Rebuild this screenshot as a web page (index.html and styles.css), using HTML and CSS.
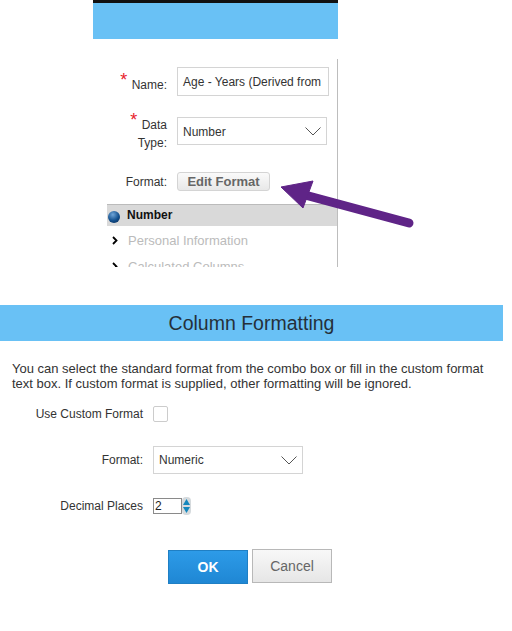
FILE: index.html
```html
<!DOCTYPE html>
<html lang="en">
<head>
<meta charset="utf-8">
<title>Column Formatting</title>
<link rel="stylesheet" href="styles.css">
</head>
<body>
<div class="top">
  <div class="top-bar"></div>
  <div class="form">
    <div class="row row-name">
      <div class="label label-name"><span class="req">*</span> Name:</div>
      <div class="field field-name">Age - Years (Derived from</div>
    </div>
    <div class="row row-type">
      <div class="label label-two"><span class="req">*</span> Data<br>Type:</div>
      <div class="field field-select"><span class="field-text">Number</span>
        <svg class="chev" viewBox="0 0 16 9"><path d="M.5.5 8 8 15.500.5" fill="none" stroke="#555" stroke-width="1"/></svg>
      </div>
    </div>
    <div class="row row-format">
      <div class="label label-format">Format:</div>
      <button class="edit">Edit Format</button>
    </div>
    <div class="tree">
      <div class="node node-on">
        <span class="ball"></span><span class="node-text">Number</span>
      </div>
      <div class="node">
        <svg class="caret" viewBox="0 0 6 9"><path d="M1 1 4.500 4.500 1 8" fill="none" stroke="#000" stroke-width="1.800"/></svg>Personal Information
      </div>
      <div class="node">
        <svg class="caret" viewBox="0 0 6 9"><path d="M1 1 4.500 4.500 1 8" fill="none" stroke="#000" stroke-width="1.800"/></svg>Calculated Columns
      </div>
    </div>
  </div>
</div>
<svg class="arrow" viewBox="0 0 512 300">
  <path d="M305 195 409 223" fill="none" stroke="#5f2487" stroke-width="9" stroke-linecap="round"/>
  <path d="M281 187 313 181 303 208Z" fill="#5f2487" stroke="#5f2487" stroke-linejoin="round"/>
</svg>
<div class="dialog">
  <h1 class="title">Column Formatting</h1>
  <p class="intro">You can select the standard format from the combo box or fill in the custom format text box. If custom format is supplied, other formatting will be ignored.</p>
  <div class="opt opt-custom">
    <div class="opt-label">Use Custom Format</div>
    <span class="check"></span>
  </div>
  <div class="opt opt-format">
    <div class="opt-label">Format:</div>
    <div class="field field-numeric">Numeric
      <svg class="chev" viewBox="0 0 16 9"><path d="M.5.5 8 8 15.500.5" fill="none" stroke="#555" stroke-width="1"/></svg>
    </div>
  </div>
  <div class="opt opt-decimal">
    <div class="opt-label">Decimal Places</div>
    <div class="spin-input">2</div>
    <svg class="spin" viewBox="0 0 9 18"><rect width="9" height="18" rx="4" fill="#d5dadd"/><path d="M4.500 2 8 8H1Z" fill="#1487bd"/><path d="M1 10H8L4.500 16Z" fill="#1487bd"/></svg>
  </div>
  <div class="actions">
    <button class="btn btn-ok">OK</button>
    <button class="btn btn-cancel">Cancel</button>
  </div>
</div>
</body>
</html>
```

FILE: styles.css
```css
* { box-sizing: border-box; }
html, body { margin: 0; padding: 0; background: #fff; }
body {
  width: 512px;
  height: 631px;
  overflow: hidden;
  position: relative;
  font-family: "Liberation Sans", Arial, sans-serif;
  font-size: 12px;
  color: #333;
}
.top { margin-left: 93px; width: 245px; height: 267px; overflow: hidden; }
.top-bar { height: 39px; background: #69c1f5; border-top: 3px solid #111; }
.form { margin-top: 20px; height: 208px; border-right: 1px solid #bdbdbd; padding-top: 8px; }
.row { display: flex; align-items: center; }
.label { width: 74px; margin-right: 10px; text-align: right; color: #333; }
.label-name { padding-top: 4px; }
.label-two { line-height: 18px; padding-top: 3px; }
.label-format { padding-top: 2px; }
.req { color: #e8212b; font-size: 18px; line-height: 10px; vertical-align: 3px; margin-right: 1px; }
.field {
  display: flex;
  align-items: center;
  border: 1px solid #d4d4d4;
  background: #fff;
  padding-left: 5px;
  color: #333;
  white-space: nowrap;
}
.row-name { height: 29px; }
.field-name { width: 152px; height: 29px; }
.row-type { height: 32px; margin-top: 20px; }
.field-select { width: 150px; height: 28px; margin-top: -2px; justify-content: space-between; padding-right: 5px; }
.field-text { padding-top: 1px; }
.chev { width: 16px; height: 9px; display: block; }
.row-format { height: 20px; margin-top: 23px; }
.edit {
  width: 93px;
  height: 19px;
  padding: 0;
  border: 1px solid #d4d4d4;
  border-radius: 3px;
  background: linear-gradient(#fafafa, #e8e8e8);
  font: bold 13px "Liberation Sans", Arial, sans-serif;
  color: #666;
}
.tree { margin-top: 13px; margin-left: 14px; font-size: 13px; }
.node { display: flex; align-items: center; height: 22px; margin-bottom: 4px; padding-left: 1px; color: #bbb; white-space: nowrap; }
.node-on { background: #d9d9d9; border-top: 1px solid #bbb; color: #111; font-weight: bold; font-size: 12px; margin-bottom: 3px; }
.node-text { margin-top: -2px; }
.ball {
  width: 12px;
  height: 12px;
  margin: 2px 7px 0 0;
  border-radius: 50%;
  background: radial-gradient(circle at 40% 30%, #6fa5d8, #124f8d 55%, #08254a);
}
.caret { width: 6px; height: 9px; margin: 0 10px 0 4px; }
.arrow { position: absolute; left: 0; top: 0; width: 512px; height: 300px; pointer-events: none; }
.dialog { margin-top: 38px; }
.title {
  width: 503px;
  height: 36px;
  margin: 0;
  background: #69c1f5;
  color: #25303a;
  font-size: 19.500px;
  font-weight: normal;
  line-height: 36px;
  text-align: center;
}
.intro { margin: 20px 0 0 12px; width: 480px; line-height: 15px; font-size: 13px; color: #333; }
.opt { display: flex; align-items: center; }
.opt-label { width: 143px; margin-right: 10px; text-align: right; color: #333; }
.check { width: 15px; height: 16px; border: 1px solid #ccc; border-radius: 2px; background: #fff; }
.opt-custom { margin-top: 15px; height: 16px; }
.opt-format { margin-top: 24px; }
.field-numeric { width: 150px; height: 28px; justify-content: space-between; padding-right: 5px; }
.opt-decimal { margin-top: 23px; }
.spin-input { width: 29px; height: 16px; border: 1px solid #8a8a8a; padding-left: 1px; line-height: 14px; color: #222; }
.spin { width: 9px; height: 18px; }
.actions { display: flex; gap: 4px; margin: 34px 0 0 168px; align-items: flex-start; }
.btn { width: 80px; height: 34px; padding: 0; font: 14px "Liberation Sans", Arial, sans-serif; }
.btn-ok { background: linear-gradient(#2d9be8, #1f87d4); border: 1px solid #1f7fc4; color: #fff; font-weight: bold; margin-top: 1px; }
.btn-cancel { background: linear-gradient(#f8f8f8, #e6e6e6); border: 1px solid #b8b8b8; color: #666; }
```
